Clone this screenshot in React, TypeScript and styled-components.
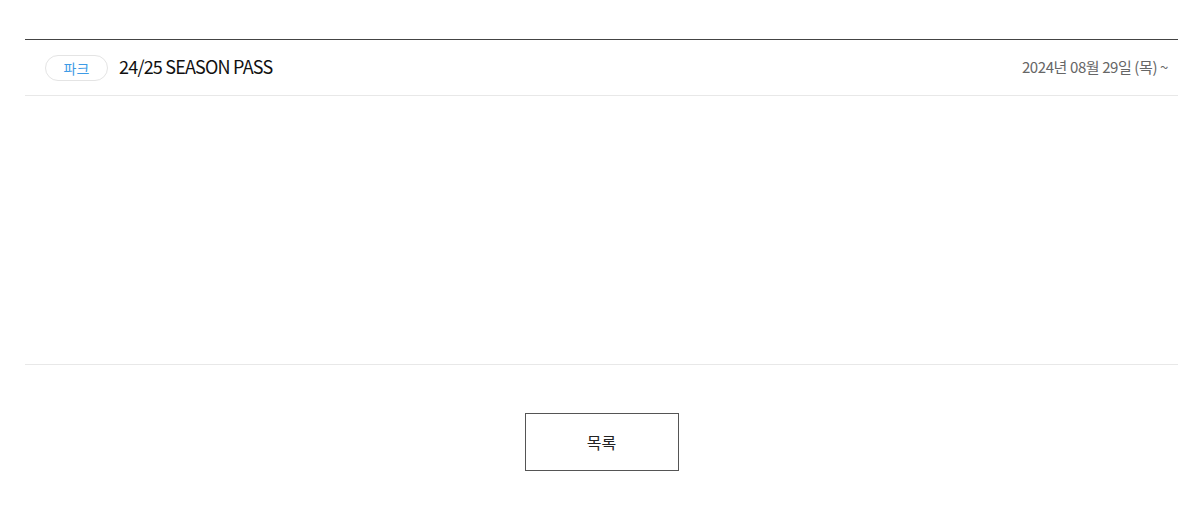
import * as React from "react"
import styled, { createGlobalStyle } from "styled-components"

const GlobalStyle = createGlobalStyle`
  html, body {
    margin: 0;
    padding: 0;
    background: #fff;
    font-family: "Noto Sans CJK KR", "Noto Sans", sans-serif;
  }
`

const Page = styled.div`
  padding: 39px 22px 0 25px;
`

const Board = styled.div`
  border-top: 1px solid #444;
`

const HeaderRow = styled.div`
  display: flex;
  align-items: center;
  height: 55px;
  padding: 0 10px 0 20px;
  border-bottom: 1px solid #e8e8e8;
`

const Badge = styled.span`
  display: inline-flex;
  align-items: center;
  justify-content: center;
  width: 63px;
  height: 26px;
  box-sizing: border-box;
  border: 1px solid #e4e4e4;
  border-radius: 13px;
  color: #3d9be6;
  font-size: 14px;
  line-height: 1;
  margin-right: 11px;
`

const Title = styled.h3`
  flex: 1;
  margin: 0 0 3px;
  color: #111;
  font-size: 18px;
  font-weight: 400;
  line-height: 1;
  letter-spacing: -0.8px;
`

const DateText = styled.span`
  color: #666;
  font-size: 15px;
  line-height: 1;
  letter-spacing: -0.4px;
  margin-bottom: 3px;
`

const Content = styled.div`
  height: 268px;
  border-bottom: 1px solid #e8e8e8;
`

const Actions = styled.div`
  display: flex;
  justify-content: center;
  padding-top: 48px;
`

const ListButton = styled.button`
  width: 154px;
  height: 58px;
  background: #fff;
  border: 1px solid #555;
  color: #222;
  font-family: inherit;
  font-size: 16px;
  cursor: pointer;
`

export default function App() {
  return (
    <>
      <GlobalStyle />
      <Page>
        <Board>
          <HeaderRow>
            <Badge>파크</Badge>
            <Title>24/25 SEASON PASS</Title>
            <DateText>2024년 08월 29일 (목) ~</DateText>
          </HeaderRow>
          <Content />
        </Board>
        <Actions>
          <ListButton>목록</ListButton>
        </Actions>
      </Page>
    </>
  )
}
